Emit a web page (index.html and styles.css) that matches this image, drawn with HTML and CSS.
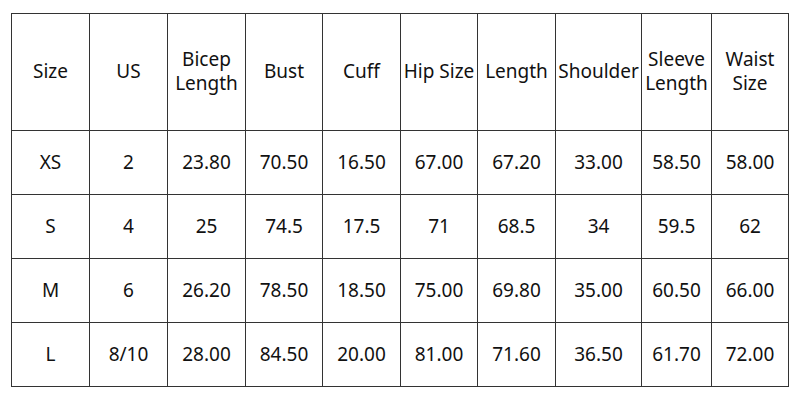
FILE: index.html
```html
<!DOCTYPE html>
<html>
<head>
<meta charset="utf-8">
<link rel="stylesheet" href="styles.css">
</head>
<body>
<div class="wrap">
<table class="chart">
<colgroup>
<col class="c78"><col class="c78"><col class="c78"><col class="c77"><col class="c78"><col class="c77"><col class="c78"><col class="c86"><col class="c70"><col class="c77">
</colgroup>
<thead>
<tr class="head"><th>Size</th><th>US</th><th>Bicep<br>Length</th><th>Bust</th><th>Cuff</th><th>Hip Size</th><th>Length</th><th>Shoulder</th><th>Sleeve<br>Length</th><th>Waist<br>Size</th></tr>
</thead>
<tbody>
<tr><td>XS</td><td>2</td><td>23.80</td><td>70.50</td><td>16.50</td><td>67.00</td><td>67.20</td><td>33.00</td><td>58.50</td><td>58.00</td></tr>
<tr><td>S</td><td>4</td><td>25</td><td>74.5</td><td>17.5</td><td>71</td><td>68.5</td><td>34</td><td>59.5</td><td>62</td></tr>
<tr><td>M</td><td>6</td><td>26.20</td><td>78.50</td><td>18.50</td><td>75.00</td><td>69.80</td><td>35.00</td><td>60.50</td><td>66.00</td></tr>
<tr><td>L</td><td>8/10</td><td>28.00</td><td>84.50</td><td>20.00</td><td>81.00</td><td>71.60</td><td>36.50</td><td>61.70</td><td>72.00</td></tr>
</tbody>
</table>
</div>
</body>
</html>
```

FILE: styles.css
```css
html, body {
  margin: 0;
  padding: 0;
  background: #fff;
}
.wrap {
  padding: 13px 0 0 11px;
}
.chart {
  border-collapse: collapse;
  table-layout: fixed;
  width: 777px;
  font-family: "Noto Sans", "Open Sans", sans-serif;
  font-size: 19px;
  line-height: 24px;
  color: #111;
}
.c78 { width: 78px; }
.c77 { width: 77px; }
.c86 { width: 86px; }
.c70 { width: 70px; }
.chart th, .chart td {
  border: 1px solid #333;
  text-align: center;
  vertical-align: middle;
  padding: 0 0 2px 0;
  font-weight: 400;
  white-space: nowrap;
  overflow: visible;
}
.chart .head th {
  height: 114px;
}
.chart tbody td {
  height: 61px;
}
```
